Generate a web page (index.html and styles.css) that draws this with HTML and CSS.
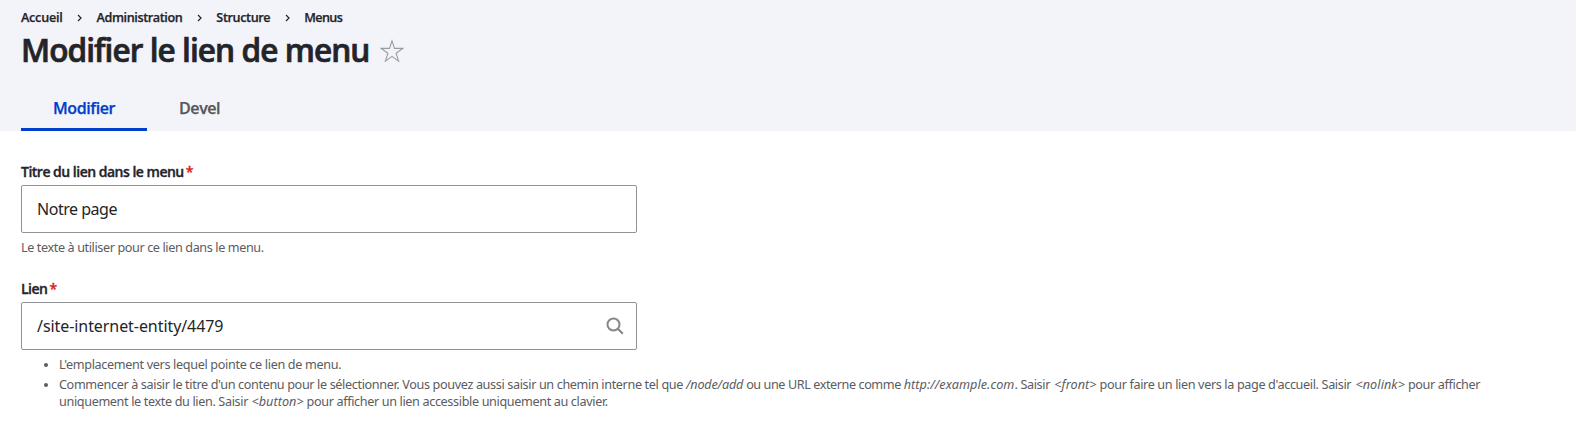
FILE: index.html
```
<!DOCTYPE html>
<html lang="fr">
<head>
<meta charset="utf-8">
<title>Modifier le lien de menu</title>
<link rel="stylesheet" href="styles.css">
</head>
<body>
<header class="header">
  <nav class="breadcrumb">
    <a class="crumb crumb-home">Accueil</a>
    <svg class="chevron" viewBox="0 0 5 8"><path d="M1 1l3 3-3 3"/></svg>
    <a class="crumb">Administration</a>
    <svg class="chevron" viewBox="0 0 5 8"><path d="M1 1l3 3-3 3"/></svg>
    <a class="crumb">Structure</a>
    <svg class="chevron" viewBox="0 0 5 8"><path d="M1 1l3 3-3 3"/></svg>
    <a class="crumb crumb-last">Menus</a>
  </nav>
  <div class="title-row">
    <h1 class="title">Modifier le lien de menu</h1>
    <svg class="star" viewBox="0 0 24 24"><path d="M12 1.8l2.5 7.6h8.2L16.1 14.2l2.5 8-6.6-4.8-6.6 4.8 2.5-8L1.3 9.4h8.2z"/></svg>
  </div>
  <nav class="tabs">
    <a class="tab tab-active">Modifier</a>
    <a class="tab">Devel</a>
  </nav>
</header>
<main class="form">
  <div class="field">
    <label class="label">Titre du lien dans le menu<span class="required">*</span></label>
    <div class="input"><span class="value">Notre page</span></div>
    <p class="help">Le texte à utiliser pour ce lien dans le menu.</p>
  </div>
  <div class="field">
    <label class="label">Lien<span class="required">*</span></label>
    <div class="input"><span class="value value-path">/site-internet-entity/4479</span>
      <svg class="search" viewBox="0 0 18 18"><circle cx="7.5" cy="7.5" r="6"/><path d="M11.8 11.8l5 5"/></svg>
    </div>
    <ul class="help-list">
      <li>L'emplacement vers lequel pointe ce lien de menu.</li>
      <li>Commencer à saisir le titre d'un contenu pour le sélectionner. Vous pouvez aussi saisir un chemin interne tel que <em class="path">/node/add</em> <span class="tight">ou une URL externe comme </span><em>http://example.com</em>. Saisir <em class="token">&lt;front&gt;</em> pour faire un lien vers la page d'accueil. Saisir <em class="token">&lt;nolink&gt;</em> pour afficher<br>uniquement le texte du lien. Saisir <em class="token token-flush">&lt;button&gt;</em> pour afficher un lien accessible uniquement au clavier.</li>
    </ul>
  </div>
</main>
</body>
</html>
```
FILE: styles.css
```
* { box-sizing: border-box; }
body {
  margin: 0;
  background: #fff;
  color: #232429;
  font-family: "Noto Sans", sans-serif;
  font-variant-ligatures: none;
}
.header {
  height: 131px;
  padding: 8px 21px 0;
  background: #f3f4f9;
  font-family: "Open Sans", sans-serif;
  font-weight: 600;
}
.breadcrumb {
  display: flex;
  align-items: center;
  height: 18px;
  font-size: 12.64px;
  line-height: 18px;
  letter-spacing: -0.4px;
  -webkit-text-stroke: 0.25px currentColor;
}
.crumb-home { letter-spacing: -0.25px; }
.crumb-last { letter-spacing: -0.6px; }
.chevron {
  width: 5px;
  height: 8px;
  margin: 2px 14px 0 15px;
  fill: none;
  stroke: #232429;
  stroke-width: 1.2;
}
.title-row {
  display: flex;
  align-items: center;
  height: 42px;
  margin-top: 2px;
}
.title {
  margin: 1px 0 0;
  font-size: 31.6px;
  line-height: 42px;
  font-weight: 600;
  letter-spacing: -0.94px;
  -webkit-text-stroke: 0.7px currentColor;
}
.star {
  width: 24px;
  height: 24px;
  margin: 4px 0 0 11px;
  fill: none;
  stroke: #9a9ba3;
  stroke-width: 1.1;
}
.tabs {
  display: flex;
  height: 47px;
  margin-top: 14px;
  font-size: 16px;
  line-height: 24px;
  letter-spacing: -0.4px;
  -webkit-text-stroke: 0.25px currentColor;
}
.tab {
  padding: 12px 32px 0;
  color: #55565b;
}
.tab-active {
  width: 126px;
  border-bottom: 3px solid #003ecc;
  color: #003ecc;
}
.form { padding: 32px 21px 0; }
.field { margin-bottom: 24px; }
.label {
  display: block;
  margin-bottom: 4px;
  font: 600 14px/18px "Open Sans", sans-serif;
  letter-spacing: -0.5px;
  -webkit-text-stroke: 0.35px currentColor;
}
.required {
  margin-left: 2px;
  color: #dc2323;
}
.input {
  display: flex;
  align-items: center;
  justify-content: space-between;
  width: 616px;
  height: 48px;
  padding: 0 12px 0 15px;
  border: 1px solid #919297;
  border-radius: 2px;
  font-size: 16px;
  line-height: 24px;
}
.value { letter-spacing: -0.48px; }
.value-path { letter-spacing: -0.07px; }
.search {
  width: 18px;
  height: 18px;
  fill: none;
  stroke: #868686;
  stroke-width: 2;
}
.help {
  margin: 6px 0 0;
  color: #5b5c61;
  font-size: 12.64px;
  line-height: 17px;
  letter-spacing: -0.39px;
}
.help-list {
  margin: 6px 0 0;
  padding-left: 38px;
  color: #5b5c61;
  font-size: 12.64px;
  line-height: 17px;
  letter-spacing: -0.34px;
}
.help-list li + li {
  margin-top: 3px;
  letter-spacing: -0.36px;
}
.help-list li::marker { font-size: 11px; }
.help-list em { letter-spacing: 0.05px; }
.help-list .path { letter-spacing: -0.17px; }
.help-list .token { margin-left: 1.3px; letter-spacing: 0.08px; }
.help-list .token-flush { margin-left: 0.5px; letter-spacing: 0.05px; }
.tight { letter-spacing: -0.42px; }
```
